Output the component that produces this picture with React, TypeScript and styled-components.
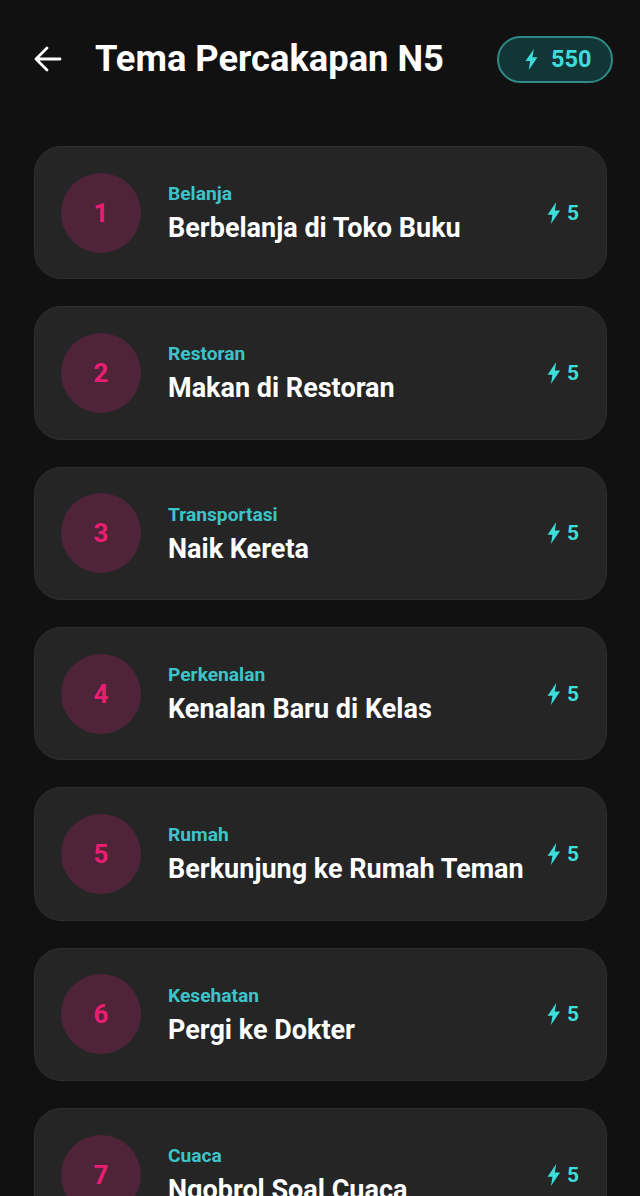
import React from 'react';
import styled, { createGlobalStyle } from 'styled-components';

const GlobalStyle = createGlobalStyle`
  html, body {
    margin: 0;
    padding: 0;
    background: #111112;
  }
  body {
    font-family: Roboto, "Liberation Sans", sans-serif;
  }
`;

const Screen = styled.div`
  width: 640px;
  height: 1196px;
  overflow: hidden;
  background: #111112;
  box-sizing: border-box;
  padding: 35px 27px 0 34px;
`;

const Header = styled.header`
  display: flex;
  align-items: center;
  height: 48px;
  margin-bottom: 63px;
`;

const BackButton = styled.button`
  display: flex;
  align-items: center;
  justify-content: center;
  width: 28px;
  height: 28px;
  padding: 0;
  margin-right: 33px;
  border: none;
  background: none;
  color: #fff;
`;

const Title = styled.h1`
  flex: 1;
  margin: 0 0 2px;
  font-size: 36.3px;
  font-weight: 700;
  color: #fff;
  white-space: nowrap;
`;

const EnergyPill = styled.div`
  display: flex;
  align-items: center;
  gap: 13px;
  box-sizing: border-box;
  width: 116px;
  height: 47px;
  padding-left: 26px;
  border: 2px solid #2f8a88;
  border-radius: 24px;
  background: #123536;
  color: #3fdcdc;
  font-size: 23.5px;
  font-weight: 700;
`;

const List = styled.ul`
  display: flex;
  flex-direction: column;
  gap: 27px;
  margin: 0;
  padding: 0;
  list-style: none;
`;

const Card = styled.li`
  display: flex;
  align-items: center;
  box-sizing: border-box;
  flex: none;
  width: 573px;
  height: 133.33px;
  padding: 0 27px 0 26px;
  border: 1px solid #2e2e2f;
  border-radius: 27px;
  background: #252526;
`;

const NumberBadge = styled.div`
  display: flex;
  align-items: center;
  justify-content: center;
  flex: none;
  width: 80px;
  height: 80px;
  margin-right: 27px;
  border-radius: 50%;
  background: #4f2338;
  color: #e91e72;
  font-size: 26px;
  font-weight: 700;
`;

const Texts = styled.div`
  flex: 1;
  display: flex;
  flex-direction: column;
  gap: 5px;
  min-width: 0;
  margin-top: 2px;
`;

const Category = styled.span`
  font-size: 19.2px;
  font-weight: 700;
  line-height: 24px;
  color: #3cc4c8;
`;

const Topic = styled.span`
  font-size: 27px;
  font-weight: 700;
  line-height: 34px;
  color: #fff;
  white-space: nowrap;
`;

const Cost = styled.div`
  display: flex;
  align-items: center;
  gap: 6px;
  flex: none;
  color: #3fdcdc;
  font-size: 21px;
  font-weight: 700;
`;

const Bolt = ({ size }: { size: number }) => (
  <svg width={size * 0.62} height={size} viewBox="0 0 10 16" fill="currentColor">
    <path d="M6.8 0 0.4 9.2h3.6L2.9 16 9.6 6.2H5.7z" />
  </svg>
);

const topics = [
  { category: 'Belanja', title: 'Berbelanja di Toko Buku' },
  { category: 'Restoran', title: 'Makan di Restoran' },
  { category: 'Transportasi', title: 'Naik Kereta' },
  { category: 'Perkenalan', title: 'Kenalan Baru di Kelas' },
  { category: 'Rumah', title: 'Berkunjung ke Rumah Teman' },
  { category: 'Kesehatan', title: 'Pergi ke Dokter' },
  { category: 'Cuaca', title: 'Ngobrol Soal Cuaca' },
];

const App = () => {
  return (
    <>
      <GlobalStyle />
      <Screen>
        <Header>
          <BackButton aria-label="Kembali">
            <svg width="28" height="28" viewBox="0 0 28 28" fill="none" stroke="currentColor" strokeWidth="2.8" strokeLinecap="round" strokeLinejoin="round">
              <path d="M2 14h24M13 3 2 14l11 11" />
            </svg>
          </BackButton>
          <Title>Tema Percakapan N5</Title>
          <EnergyPill>
            <Bolt size={21} />
            550
          </EnergyPill>
        </Header>
        <List>
          {topics.map((t, i) => (
            <Card key={t.title}>
              <NumberBadge>{i + 1}</NumberBadge>
              <Texts>
                <Category>{t.category}</Category>
                <Topic>{t.title}</Topic>
              </Texts>
              <Cost>
                <Bolt size={22} />5
              </Cost>
            </Card>
          ))}
        </List>
      </Screen>
    </>
  );
};

export default App;
